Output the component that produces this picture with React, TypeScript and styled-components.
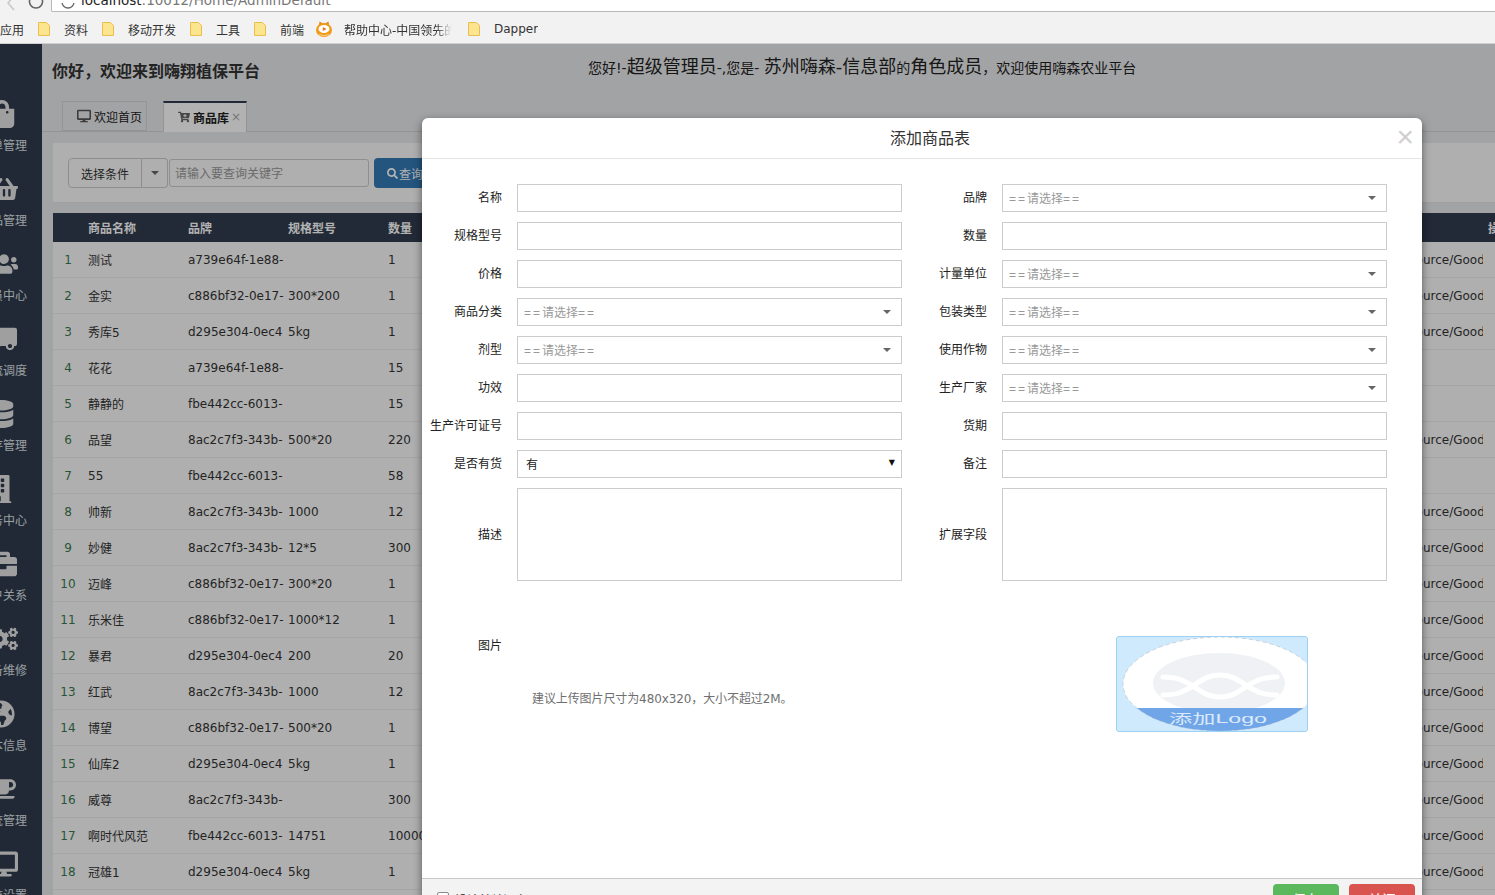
import React from "react";
import styled, { createGlobalStyle } from "styled-components";
import {
  FaShoppingBag,
  FaShoppingBasket,
  FaUsers,
  FaTruck,
  FaDatabase,
  FaBuilding,
  FaBriefcase,
  FaCogs,
  FaGlobeAmericas,
  FaCoffee,
  FaDesktop,
  FaSearch,
  FaCartPlus,
} from "react-icons/fa";

const FONT = `"DejaVu Sans", "Noto Sans CJK SC", sans-serif`;

const Global = createGlobalStyle`
  html, body {
    margin: 0;
    height: 100%;
    overflow: hidden;
    background: #fff;
    font-family: ${FONT};
    font-size: 12px;
  }
  * { box-sizing: border-box; }
`;

const Root = styled.div`
  width: 1495px;
  height: 895px;
  display: flex;
  flex-direction: column;
  overflow: hidden;
`;

const AddressRow = styled.div`
  height: 12px;
  flex: none;
  display: flex;
  background: #f2f2f2;
  overflow: hidden;
`;

const NavIcons = styled.svg`
  width: 51px;
  height: 12px;
  flex: none;
`;

const AddressBar = styled.div`
  flex: 1;
  height: 12px;
  background: #fff;
  border: 1px solid #b8b8b8;
  border-width: 0 0 1px 1px;
  border-radius: 0 0 0 2px;
  display: flex;
  align-items: flex-end;
  gap: 6px;
  padding-left: 9px;
  font-size: 13.5px;
  line-height: 16px;
  color: #777;
  white-space: nowrap;
  overflow: hidden;
`;

const AddressText = styled.span`
  transform: translateY(-3px);
  b { font-weight: normal; color: #222; }
`;

const Bookmarks = styled.div`
  height: 32px;
  flex: none;
  background: #f2f2f2;
  border-bottom: 1px solid #cfcfcf;
  display: flex;
  align-items: center;
  padding-top: 3px;
  color: #333;
  font-size: 12px;
  white-space: nowrap;
`;

const Bookmark = styled.div<{ $width: number; $gap?: number }>`
  width: ${(p) => p.$width}px;
  flex: none;
  display: flex;
  align-items: center;
  gap: ${(p) => p.$gap ?? 14}px;
`;

const BookmarkLabel = styled.span<{ $fade?: boolean }>`
  display: block;
  overflow: hidden;
  ${(p) =>
    p.$fade &&
    `width: 108px;
     -webkit-mask-image: linear-gradient(to right, #000 85%, transparent);
     mask-image: linear-gradient(to right, #000 85%, transparent);`}
`;

const Page = styled.div`
  flex: 1;
  min-height: 0;
  position: relative;
  display: flex;
  background: #e9eaec;
  overflow: hidden;
`;

const Sidebar = styled.div`
  width: 42px;
  flex: none;
  background: #2f3b4d;
  overflow: hidden;
  padding-top: 54px;
  color: #dfe3e8;
`;

const SideItem = styled.div`
  height: 75px;
  display: flex;
  flex-direction: column;
  align-items: flex-end;
  width: 27px;
  white-space: nowrap;
`;

const SideIcon = styled.div<{ $shift: number; $flip?: boolean }>`
  height: 32px;
  display: flex;
  align-items: center;
  margin-right: ${(p) => p.$shift}px;
  font-size: 28px;
  color: #e4e4e4;
  ${(p) => p.$flip && "transform: scaleX(-1);"}
`;

const SideLabel = styled.div`
  margin-top: 8px;
  font-size: 12px;
  line-height: 16px;
`;

const Main = styled.div`
  flex: 1;
  min-width: 0;
  display: flex;
  flex-direction: column;
`;

const TopBar = styled.div`
  height: 57px;
  flex: none;
  display: flex;
  align-items: center;
  padding: 0 0 0 10px;
`;

const Welcome = styled.h1`
  margin: 0;
  width: 536px;
  font-size: 16px;
  font-weight: bold;
  color: #333;
  padding-bottom: 5px;
  white-space: nowrap;
`;

const Greeting = styled.div`
  display: flex;
  align-items: baseline;
  color: #222;
  font-size: 14px;
  white-space: nowrap;
  padding-bottom: 15px;
`;

const GreetingBig = styled.span`
  font-size: 18px;
`;

const TabBar = styled.div`
  height: 31px;
  flex: none;
  display: flex;
  align-items: flex-end;
  gap: 16px;
  padding-left: 20px;
  border-bottom: 1px solid #d5d5d5;
`;

const Tab = styled.div<{ $active?: boolean }>`
  height: ${(p) => (p.$active ? "31px" : "30px")};
  width: ${(p) => (p.$active ? "84px" : "85px")};
  margin-bottom: ${(p) => (p.$active ? "-1px" : "0")};
  display: flex;
  align-items: center;
  gap: 3px;
  font-size: 12px;
  color: #222;
  background: ${(p) => (p.$active ? "#fff" : "transparent")};
  border: 1px solid #d5d5d5;
  border-bottom: ${(p) => (p.$active ? "none" : "1px solid #d5d5d5")};
  border-top: ${(p) => (p.$active ? "2px solid #2f3b4d" : "1px solid #d5d5d5")};
  font-weight: ${(p) => (p.$active ? "bold" : "normal")};
  padding: 0 0 ${(p) => (p.$active ? "1px" : "0")} 14px;
`;

const TabClose = styled.span`
  font-weight: normal;
  font-size: 12px;
  color: #aaa;
  margin-left: -1px;
`;

const Content = styled.div`
  flex: 1;
  min-height: 0;
  padding: 11px 0 0 11px;
  background: #e9eaec;
`;

const SearchPanel = styled.div`
  height: 60px;
  background: #fbfbfb;
  border-bottom: 1px solid #e6e6e6;
  display: flex;
  align-items: flex-start;
  padding: 15px 0 0 15px;
`;

const ConditionButton = styled.div`
  width: 74px;
  height: 30px;
  border: 1px solid #ccc;
  border-radius: 4px 0 0 4px;
  display: flex;
  align-items: center;
  justify-content: center;
  color: #333;
`;

const CaretButton = styled.div`
  width: 26px;
  height: 30px;
  border: 1px solid #ccc;
  border-left: none;
  border-radius: 0 4px 4px 0;
  display: flex;
  align-items: center;
  justify-content: center;
`;

const Caret = styled.i`
  display: block;
  width: 0;
  height: 0;
  border-left: 4px solid transparent;
  border-right: 4px solid transparent;
  border-top: 4px solid #666;
`;

const KeywordBox = styled.div`
  width: 200px;
  height: 28px;
  margin: 1px 5px 0 1px;
  border: 1px solid #ccc;
  border-radius: 3px;
  padding-left: 5px;
  line-height: 28px;
  color: #999;
`;

const QueryButton = styled.div`
  width: 90px;
  height: 30px;
  background: #337ab7;
  color: #fff;
  border-radius: 4px;
  display: flex;
  align-items: center;
  padding-left: 13px;
  gap: 1px;
`;

const Table = styled.div`
  margin-top: 10px;
  overflow: hidden;
`;

const GRID = "35px 100px 100px 100px 956px 144px 32px";

const HeadRow = styled.div`
  height: 29px;
  display: grid;
  grid-template-columns: ${GRID};
  align-items: center;
  background: #323d50;
  color: #fff;
  font-weight: bold;
  white-space: nowrap;
  padding-bottom: 1px;
`;

const Row = styled.div`
  height: 36px;
  display: grid;
  grid-template-columns: ${GRID};
  align-items: center;
  background: #fbfbfb;
  border-bottom: 1px solid #ececec;
  color: #333;
  white-space: nowrap;
`;

const IndexCell = styled.div`
  color: #3a7a4e;
  text-align: center;
  padding-right: 5px;
`;

const Cell = styled.div`
  overflow: hidden;
`;

const PathCell = styled(Cell)`
  width: 139px;
`;

const Overlay = styled.div`
  position: absolute;
  inset: 0;
  background: rgba(0, 0, 0, 0.3);
`;

const Modal = styled.div`
  position: absolute;
  left: 422px;
  top: 74px;
  width: 1000px;
  background: #fff;
  border-radius: 6px 6px 0 0;
  box-shadow: 0 3px 9px rgba(0, 0, 0, 0.5);
`;

const ModalHeader = styled.div`
  height: 41px;
  position: relative;
  border-bottom: 1px solid #e5e5e5;
  display: flex;
  align-items: center;
  justify-content: center;
  padding: 0 0 2px 16px;
  color: #333;
`;

const ModalTitle = styled.h4`
  margin: 0;
  font-size: 16px;
  font-weight: normal;
`;

const CloseMark = styled.span`
  position: absolute;
  right: 8px;
  top: 4px;
  font-family: "Liberation Sans", sans-serif;
  font-size: 30px;
  line-height: 30px;
  color: #cfcfcf;
`;

const ModalBody = styled.div`
  height: 719px;
  padding-top: 25px;
`;

const FormGrid = styled.div`
  display: grid;
  grid-template-columns: 80px 385px 70px 385px;
  grid-template-rows: repeat(8, 28px) 93px;
  column-gap: 15px;
  row-gap: 10px;
  align-items: center;
  color: #222;
  font-size: 12px;
`;

const FieldLabel = styled.label`
  text-align: right;
  white-space: nowrap;
  padding-bottom: 3px;
`;

const TextBox = styled.div`
  height: 28px;
  border: 1px solid #ccc;
  background: #fff;
`;

const SelectBox = styled(TextBox)`
  display: flex;
  align-items: center;
  justify-content: space-between;
  padding: 0 10px 0 6px;
  color: #999;
`;

const SelectText = styled.span`
  padding-bottom: 2px;
`;

const Equals = styled.span`
  font-family: "Liberation Sans", sans-serif;
  letter-spacing: 2px;
`;

const StockBox = styled(TextBox)`
  display: flex;
  align-items: center;
  justify-content: space-between;
  padding: 0 6px 0 8px;
  color: #222;
`;

const StockText = styled.span`
  padding-bottom: 1px;
`;

const StockCaret = styled.span`
  font-size: 8px;
  color: #111;
  padding-bottom: 3px;
`;

const AreaBox = styled(TextBox)`
  height: 93px;
`;

const UploadRow = styled.div`
  margin-top: 55px;
  height: 96px;
  display: grid;
  grid-template-columns: 80px 1fr 192px;
  column-gap: 15px;
  padding-right: 114px;
  color: #222;
`;

const UploadLabel = styled.label`
  text-align: right;
`;

const UploadHint = styled.p`
  margin: 53px 0 0 15px;
  color: #6f6f6f;
  font-size: 12px;
  letter-spacing: -0.1px;
`;

const LogoFrame = styled.div`
  width: 192px;
  height: 96px;
  border: 1px solid #9fd2f2;
  border-radius: 3px;
  background: #cfeafd;
  overflow: hidden;
`;

const ModalFooter = styled.div`
  height: 60px;
  background: #f3f3f3;
  border-top: 1px solid #c8c8c8;
  display: flex;
  justify-content: space-between;
  padding: 5px 7px 0 15px;
`;

const KeepOpen = styled.label`
  display: flex;
  align-items: flex-start;
  gap: 6px;
  padding-top: 7px;
  color: #222;
`;

const CheckMark = styled.span`
  width: 12px;
  height: 12px;
  flex: none;
  margin-top: 1px;
  border: 1px solid #8a8a8a;
  border-radius: 2px;
  background: #fff;
`;

const FooterActions = styled.div`
  display: flex;
  gap: 10px;
`;

const ActionButton = styled.div<{ $color: string }>`
  width: 66px;
  height: 30px;
  border-radius: 4px;
  background: ${(p) => p.$color};
  color: #fff;
  font-size: 14px;
  display: flex;
  align-items: center;
  justify-content: center;
`;

type GoodsRow = [string, string, string, string, boolean];

const ROWS: GoodsRow[] = [
  ["测试", "a739e64f-1e88-", "", "1", true],
  ["金实", "c886bf32-0e17-", "300*200", "1", true],
  ["秀库5", "d295e304-0ec4", "5kg", "1", true],
  ["花花", "a739e64f-1e88-", "", "15", false],
  ["静静的", "fbe442cc-6013-", "", "15", false],
  ["品望", "8ac2c7f3-343b-", "500*20", "220", true],
  ["55", "fbe442cc-6013-", "", "58", false],
  ["帅新", "8ac2c7f3-343b-", "1000", "12", true],
  ["妙健", "8ac2c7f3-343b-", "12*5", "300", true],
  ["迈峰", "c886bf32-0e17-", "300*20", "1", true],
  ["乐米佳", "c886bf32-0e17-", "1000*12", "1", true],
  ["暴君", "d295e304-0ec4", "200", "20", true],
  ["红武", "8ac2c7f3-343b-", "1000", "12", true],
  ["博望", "c886bf32-0e17-", "500*20", "1", true],
  ["仙库2", "d295e304-0ec4", "5kg", "1", true],
  ["威尊", "8ac2c7f3-343b-", "", "300", true],
  ["啊时代风范", "fbe442cc-6013-", "14751", "10000", true],
  ["冠雄1", "d295e304-0ec4", "5kg", "1", true],
];

const SIDE_ITEMS = [
  { icon: <FaShoppingBag />, label: "订单管理", shift: 12 },
  { icon: <FaShoppingBasket />, label: "商品管理", shift: 10 },
  { icon: <FaUsers />, label: "会员中心", shift: 10 },
  { icon: <FaTruck />, label: "物流调度", shift: 11, flip: true },
  { icon: <FaDatabase />, label: "库存管理", shift: 13 },
  { icon: <FaBuilding />, label: "财务中心", shift: 15 },
  { icon: <FaBriefcase />, label: "客户关系", shift: 11 },
  { icon: <FaCogs />, label: "设备维修", shift: 10 },
  { icon: <FaGlobeAmericas />, label: "基本信息", shift: 13 },
  { icon: <FaCoffee />, label: "系统管理", shift: 12 },
  { icon: <FaDesktop />, label: "系统设置", shift: 10 },
];

function Folder() {
  return (
    <svg width="12" height="14" viewBox="0 0 12 14">
      <path d="M.5.5h8l3 3v10H.5z" fill="#fde48f" stroke="#e9c04f" />
    </svg>
  );
}

function Mascot() {
  return (
    <svg width="16" height="16" viewBox="0 0 16 16">
      <path d="M3 4L3.5 0.5L7 2.5H9L12.5 0.5L13 4z" fill="#e8841a" />
      <ellipse cx="8" cy="9" rx="8" ry="7" fill="#f09a1a" />
      <ellipse cx="8" cy="8" rx="5.5" ry="4" fill="#fff" />
      <path d="M6.8 6L10.5 8L6.8 10z" fill="#e8761a" />
      <path d="M3 13.5Q8 16 13 13.5" fill="none" stroke="#fbd38a" strokeWidth="1" />
    </svg>
  );
}

function LogoArt() {
  return (
    <svg width="190" height="94" viewBox="0 0 190 94">
      <defs>
        <clipPath id="logo-shape">
          <ellipse cx="103" cy="47" rx="97" ry="47" />
        </clipPath>
      </defs>
      <ellipse cx="103" cy="47" rx="97" ry="47" fill="#fff" stroke="#c9d0d6" strokeDasharray="4 3" />
      <g clipPath="url(#logo-shape)">
        <ellipse cx="102" cy="46" rx="66" ry="30" fill="#eff1f5" />
        <g fill="none" stroke="#fff" strokeWidth="5" strokeLinecap="round">
          <path d="M46 40C60 40 66 43 76 49C86 56 92 60 103 60C114 60 120 56 130 49C140 43 146 40 160 40" />
          <path d="M46 58C60 58 66 55 76 49C86 42 92 38 103 38C114 38 120 42 130 49C140 55 146 58 160 58" />
        </g>
        <rect x="0" y="71" width="190" height="23" fill="#70a6e8" />
      </g>
      <text
        x="52"
        y="86"
        fontSize="13"
        fill="#dbe9fa"
        textLength="98"
        lengthAdjust="spacingAndGlyphs"
        fontFamily={`"Liberation Sans", "Noto Sans CJK SC", sans-serif`}
      >
        添加Logo
      </text>
    </svg>
  );
}

function Select() {
  return (
    <SelectBox>
      <SelectText><Equals>==</Equals>请选择<Equals>==</Equals></SelectText>
      <Caret />
    </SelectBox>
  );
}

export default function App() {
  return (
    <Root>
      <Global />
      <AddressRow>
        <NavIcons viewBox="0 0 51 12">
          <path d="M14 -4L8 3L14 10" fill="none" stroke="#c8c8c8" strokeWidth="1.6" />
          <path d="M42 -1A6.5 6.5 0 1 1 30 -1" fill="none" stroke="#666" strokeWidth="1.6" />
        </NavIcons>
        <AddressBar>
          <svg width="14" height="6" viewBox="0 8 14 6" style={{ flex: "none", marginBottom: 2 }}>
            <circle cx="7" cy="7" r="6" fill="none" stroke="#666" strokeWidth="1.3" />
          </svg>
          <AddressText>
            <b>localhost</b>:10012/Home/AdminDefault
          </AddressText>
        </AddressBar>
      </AddressRow>
      <Bookmarks>
        <Bookmark $width={38}>应用</Bookmark>
        <Bookmark $width={64}><Folder /><BookmarkLabel>资料</BookmarkLabel></Bookmark>
        <Bookmark $width={88}><Folder /><BookmarkLabel>移动开发</BookmarkLabel></Bookmark>
        <Bookmark $width={64}><Folder /><BookmarkLabel>工具</BookmarkLabel></Bookmark>
        <Bookmark $width={62}><Folder /><BookmarkLabel>前端</BookmarkLabel></Bookmark>
        <Bookmark $width={152} $gap={12}>
          <Mascot />
          <BookmarkLabel $fade>帮助中心-中国领先的</BookmarkLabel>
        </Bookmark>
        <Bookmark $width={80}><Folder /><BookmarkLabel>Dapper</BookmarkLabel></Bookmark>
      </Bookmarks>
      <Page>
        <Sidebar>
          {SIDE_ITEMS.map((item) => (
            <SideItem key={item.label}>
              <SideIcon $shift={item.shift - 1} $flip={item.flip}>{item.icon}</SideIcon>
              <SideLabel>{item.label}</SideLabel>
            </SideItem>
          ))}
        </Sidebar>
        <Main>
          <TopBar>
            <Welcome>你好，欢迎来到嗨翔植保平台</Welcome>
            <Greeting>
              您好!-<GreetingBig>超级管理员</GreetingBig>-,您是-&nbsp;<GreetingBig>苏州嗨森-信息部</GreetingBig>的<GreetingBig>角色成员</GreetingBig>，欢迎使用嗨森农业平台
            </Greeting>
          </TopBar>
          <TabBar>
            <Tab><FaDesktop color="#555" size={14} />欢迎首页</Tab>
            <Tab $active><FaCartPlus color="#666" size={12} />商品库<TabClose>×</TabClose></Tab>
          </TabBar>
          <Content>
            <SearchPanel>
              <ConditionButton>选择条件</ConditionButton>
              <CaretButton><Caret /></CaretButton>
              <KeywordBox>请输入要查询关键字</KeywordBox>
              <QueryButton><FaSearch size={11} />查询</QueryButton>
            </SearchPanel>
            <Table>
              <HeadRow>
                <span />
                <Cell>商品名称</Cell>
                <Cell>品牌</Cell>
                <Cell>规格型号</Cell>
                <Cell>数量</Cell>
                <Cell />
                <Cell>操作</Cell>
              </HeadRow>
              {ROWS.map((row, i) => (
                <Row key={i}>
                  <IndexCell>{i + 1}</IndexCell>
                  <Cell>{row[0]}</Cell>
                  <Cell>{row[1]}</Cell>
                  <Cell>{row[2]}</Cell>
                  <Cell>{row[3]}</Cell>
                  <PathCell>{row[4] ? "/Upload/Resource/Goods/" : ""}</PathCell>
                  <Cell />
                </Row>
              ))}
              <Row />
            </Table>
          </Content>
        </Main>
        <Overlay />
        <Modal>
          <ModalHeader>
            <ModalTitle>添加商品表</ModalTitle>
            <CloseMark>×</CloseMark>
          </ModalHeader>
          <ModalBody>
            <FormGrid>
              <FieldLabel>名称</FieldLabel><TextBox />
              <FieldLabel>品牌</FieldLabel><Select />
              <FieldLabel>规格型号</FieldLabel><TextBox />
              <FieldLabel>数量</FieldLabel><TextBox />
              <FieldLabel>价格</FieldLabel><TextBox />
              <FieldLabel>计量单位</FieldLabel><Select />
              <FieldLabel>商品分类</FieldLabel><Select />
              <FieldLabel>包装类型</FieldLabel><Select />
              <FieldLabel>剂型</FieldLabel><Select />
              <FieldLabel>使用作物</FieldLabel><Select />
              <FieldLabel>功效</FieldLabel><TextBox />
              <FieldLabel>生产厂家</FieldLabel><Select />
              <FieldLabel>生产许可证号</FieldLabel><TextBox />
              <FieldLabel>货期</FieldLabel><TextBox />
              <FieldLabel>是否有货</FieldLabel>
              <StockBox><StockText>有</StockText><StockCaret>▼</StockCaret></StockBox>
              <FieldLabel>备注</FieldLabel><TextBox />
              <FieldLabel>描述</FieldLabel><AreaBox />
              <FieldLabel>扩展字段</FieldLabel><AreaBox />
            </FormGrid>
            <UploadRow>
              <UploadLabel>图片</UploadLabel>
              <UploadHint>建议上传图片尺寸为480x320，大小不超过2M。</UploadHint>
              <LogoFrame><LogoArt /></LogoFrame>
            </UploadRow>
          </ModalBody>
          <ModalFooter>
            <KeepOpen><CheckMark />设计并关闭窗口</KeepOpen>
            <FooterActions>
              <ActionButton $color="#5cb85c">保存</ActionButton>
              <ActionButton $color="#d9534f">关闭</ActionButton>
            </FooterActions>
          </ModalFooter>
        </Modal>
      </Page>
    </Root>
  );
}
